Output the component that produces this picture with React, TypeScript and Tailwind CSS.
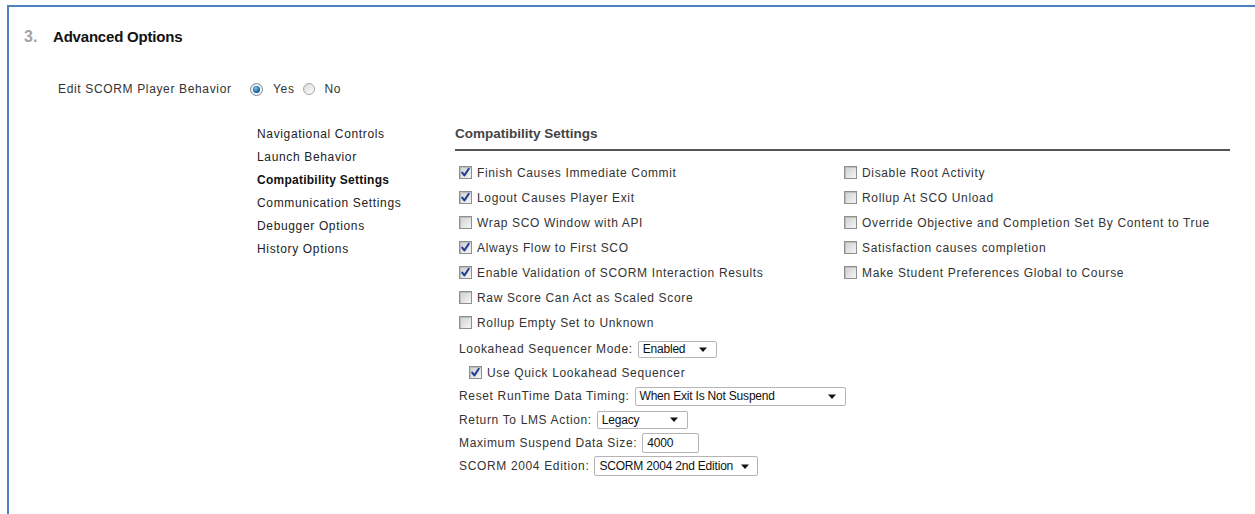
import React from "react";

const nav = [
    { label: "Navigational Controls" },
    { label: "Launch Behavior" },
    { label: "Compatibility Settings", active: true },
    { label: "Communication Settings" },
    { label: "Debugger Options" },
    { label: "History Options" },
];

const leftChecks = [
    { label: "Finish Causes Immediate Commit", on: true },
    { label: "Logout Causes Player Exit", on: true },
    { label: "Wrap SCO Window with API", on: false },
    { label: "Always Flow to First SCO", on: true },
    { label: "Enable Validation of SCORM Interaction Results", on: true },
    { label: "Raw Score Can Act as Scaled Score", on: false },
    { label: "Rollup Empty Set to Unknown", on: false },
];

const rightChecks = [
    "Disable Root Activity",
    "Rollup At SCO Unload",
    "Override Objective and Completion Set By Content to True",
    "Satisfaction causes completion",
    "Make Student Preferences Global to Course",
];

function Checkbox({ on }: { on?: boolean }) {
    return (
        <span className="relative flex h-[13px] w-[13px] shrink-0 items-center justify-center border border-[#8e8f8f] bg-linear-to-br from-[#cfcfcf] to-[#f5f5f5] shadow-[inset_1px_1px_0_#bdbdbd]">
            {on && (
                <svg width="11" height="11" viewBox="0 0 11 11" className="absolute left-0 top-0">
                    <path d="M2.2 5.6 L4.4 8.4 L8.8 1.8" fill="none" stroke="#1f3c94" strokeWidth="2" strokeLinecap="round" strokeLinejoin="round" />
                </svg>
            )}
        </span>
    );
}

function CheckRow({ label, on }: { label: string; on?: boolean }) {
    return (
        <div className="flex h-[25px] items-center gap-[5px]">
            <Checkbox on={on} />
            <span>{label}</span>
        </div>
    );
}

function Radio({ on }: { on?: boolean }) {
    if (on) {
        return (
            <span className="flex h-[13px] w-[13px] items-center justify-center rounded-full border border-[#7d8790] bg-linear-to-br from-[#e4e4e4] to-white">
                <span className="h-[7px] w-[7px] rounded-full bg-[radial-gradient(circle_at_40%_35%,#8cc7ec,#1b6da5_55%,#0b3b66)]" />
            </span>
        );
    }
    return <span className="h-[12px] w-[12px] rounded-full border border-[#a5a5a5] bg-linear-to-br from-[#d8d8d8] to-white" />;
}

function Arrow() {
    return (
        <svg width="8" height="5" viewBox="0 0 8 5" className="shrink-0">
            <polygon points="0,0.5 8,0.5 4,5" fill="#111" />
        </svg>
    );
}

function Dropdown({ value, className }: { value: string; className: string }) {
    return (
        <div className={`flex items-center justify-between gap-[8px] rounded-[2px] border border-[#b5b5b5] bg-white pl-[4px] pr-[9px] text-[12px] tracking-[-0.2px] text-[#111] ${className}`}>
            <span className="whitespace-nowrap">{value}</span>
            <Arrow />
        </div>
    );
}

export default function App() {
    return (
        <div className="h-[514px] w-full bg-white pl-[7px] pt-[5px] font-['Liberation_Sans',Arial,sans-serif] text-[12px] tracking-[0.65px] text-[#333]">
            <div className="h-full border-l-2 border-t-2 border-[#4f81bd]">
                {/* section title */}
                <div className="mt-[21px] flex h-[18px] items-center pl-[15px]">
                    <span className="w-[29px] text-[16px] font-bold tracking-normal text-[#a3a3a3]">3.</span>
                    <span className="text-[15px] font-bold tracking-[-0.2px] text-[#111]">Advanced Options</span>
                </div>

                <div className="mt-[35px] flex h-[16px] items-center pl-[49px]">
                    <span className="w-[192px]">Edit SCORM Player Behavior</span>
                    <Radio on />
                    <span className="ml-[10px] mr-[8px]">Yes</span>
                    <Radio />
                    <span className="ml-[10px]">No</span>
                </div>

                <div className="mt-[25px] flex pl-[248px] pr-[25px]">
                    {/* settings menu */}
                    <ul className="w-[198px]">
                        {nav.map((n) => (
                            <li key={n.label} className={`flex h-[23px] items-center ${n.active ? "font-bold tracking-[0.25px] text-[#111]" : "text-[#222]"}`}>
                                {n.label}
                            </li>
                        ))}
                    </ul>

                    <div className="flex-1 pt-[4px]">
                        <h3 className="h-[25px] border-b-2 border-[#555] pb-[7px] text-[13.5px] font-bold leading-[16px] tracking-normal text-[#444]">
                            Compatibility Settings
                        </h3>

                        <div className="mt-[9px] flex">
                            <div className="w-[385px] pl-[4px]">
                                {leftChecks.map((c) => (
                                    <CheckRow key={c.label} label={c.label} on={c.on} />
                                ))}
                            </div>
                            <div className="pl-[4px]">
                                {rightChecks.map((c) => (
                                    <CheckRow key={c} label={c} />
                                ))}
                            </div>
                        </div>

                        <div className="mt-[2px] pl-[4px]">
                            <div className="flex h-[24px] items-center gap-[5px]">
                                <span>Lookahead Sequencer Mode:</span>
                                <Dropdown value="Enabled" className="h-[17px] w-[79px]" />
                            </div>
                            <div className="flex h-[23px] items-center gap-[5px] pl-[10px]">
                                <Checkbox on />
                                <span>Use Quick Lookahead Sequencer</span>
                            </div>
                            <div className="flex h-[24px] items-center gap-[5px]">
                                <span>Reset RunTime Data Timing:</span>
                                <Dropdown value="When Exit Is Not Suspend" className="h-[19px] w-[211px]" />
                            </div>
                            <div className="flex h-[23px] items-center gap-[5px]">
                                <span>Return To LMS Action:</span>
                                <Dropdown value="Legacy" className="h-[18px] w-[91px]" />
                            </div>
                            <div className="flex h-[23px] items-center gap-[5px]">
                                <span>Maximum Suspend Data Size:</span>
                                <input
                                    readOnly
                                    value="4000"
                                    className="h-[20px] w-[57px] rounded-[2px] border border-[#b5b5b5] bg-white px-[4px] text-[12px] tracking-[-0.2px] text-[#111] outline-none"
                                />
                            </div>
                            <div className="flex h-[24px] items-center gap-[5px]">
                                <span>SCORM 2004 Edition:</span>
                                <Dropdown value="SCORM 2004 2nd Edition" className="h-[20px] w-[164px]" />
                            </div>
                        </div>
                    </div>
                </div>
            </div>
        </div>
    );
}
